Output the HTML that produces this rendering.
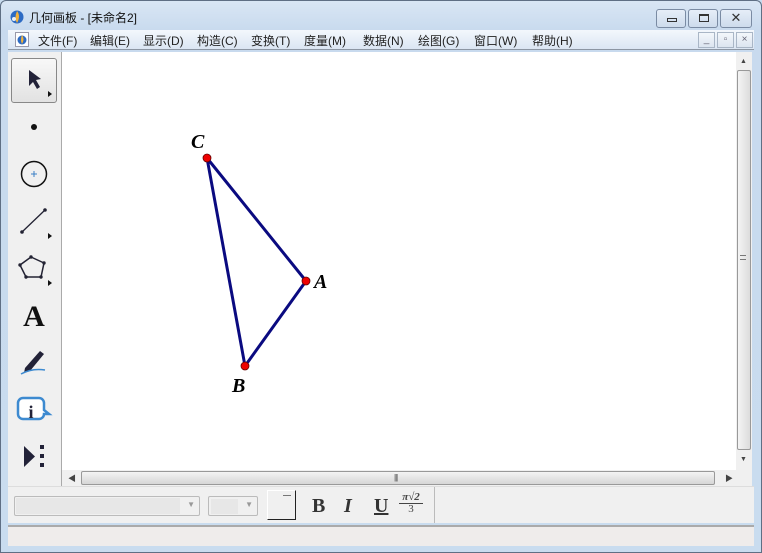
<!DOCTYPE html>
<html><head><meta charset="utf-8"><style>
*{margin:0;padding:0;box-sizing:border-box}
body{width:762px;height:553px;overflow:hidden;position:relative;background:#c9dcef;font-family:"Liberation Sans","Noto Sans CJK SC",sans-serif;font-size:12px}
.abs{position:absolute}
#frame{left:0;top:0;width:762px;height:553px;border:1px solid #5f6f84;border-radius:6px 6px 0 0;background:linear-gradient(#d9e6f4,#c8daee 30px,#c9dcef)}
.tb{top:9px;height:19px;border:1px solid #7a8ba3;border-radius:3px;background:linear-gradient(#e6eef8,#cddbec)}
#menu{left:8px;top:30px;width:746px;height:20px;background:linear-gradient(#f3f7fc,#dbe6f3);border-bottom:1px solid #8c96a3}
#menu span{position:absolute;top:2px;color:#222;font-size:12px}
.mb{top:2px;width:17px;height:16px;border:1px solid #a9b6c6;background:linear-gradient(#f3f7fb,#dce5f0);color:#667;font-size:10px;text-align:center;line-height:14px}
#tools{left:8px;top:52px;width:54px;height:434px;background:#f0f0f0;border-right:1px solid #aaa}
#canvas{left:62px;top:52px;width:674px;height:418px;background:#fff}
#vs{left:736px;top:52px;width:16px;height:418px;background:#f0f0f0}
#hs{left:62px;top:470px;width:690px;height:16px;background:#f0f0f0}
#fmt{left:8px;top:486px;width:746px;height:37px;background:#f0f0f0;border-top:1px solid #ddd}
#status{left:8px;top:525px;width:746px;height:21px;background:#efeceb;border-top:2px solid #aaa}
</style></head><body>
<div id="frame" class="abs"></div>
<svg class="abs" style="left:9px;top:9px" width="16" height="16" viewBox="0 0 16 16"><circle cx="8" cy="8" r="6.5" fill="#2d6bc4"/><path d="M8 2 Q12 7 8 14 Q5 9 8 2Z" fill="#f3b23a"/><circle cx="5" cy="10" r="2" fill="#e9eef5"/></svg>
<div class="abs" style="left:29px;top:9px;font-size:12px;color:#111">几何画板 - [未命名2]</div>
<div class="abs tb" style="left:656px;width:30px"><div class="abs" style="left:10px;top:8px;width:10px;height:4px;border:1px solid #333"></div></div>
<div class="abs tb" style="left:688px;width:30px"><div class="abs" style="left:10px;top:4px;width:10px;height:8px;border:1px solid #333;border-top-width:2px"></div></div>
<div class="abs tb" style="left:720px;width:32px;text-align:center;line-height:16px;font-size:13px;color:#333">✕</div>
<div id="menu" class="abs">
<svg class="abs" style="left:7px;top:2px" width="14" height="15" viewBox="0 0 14 15"><rect x="0.5" y="0.5" width="13" height="14" fill="#fff" stroke="#99a"/><circle cx="7" cy="8" r="4.5" fill="#2d6bc4"/><path d="M7 3 Q10 7 7 12 Q5 8 7 3Z" fill="#f3b23a"/></svg>
<span style="left:30px">文件(F)</span><span style="left:82px">编辑(E)</span><span style="left:135px">显示(D)</span><span style="left:189px">构造(C)</span><span style="left:243px">变换(T)</span><span style="left:296px">度量(M)</span><span style="left:355px">数据(N)</span><span style="left:410px">绘图(G)</span><span style="left:466px">窗口(W)</span><span style="left:524px">帮助(H)</span>
<div class="abs mb" style="left:690px">_</div><div class="abs mb" style="left:709px">▫</div><div class="abs mb" style="left:728px">×</div>
</div>
<div id="tools" class="abs">
<div class="abs" style="left:3px;top:6px;width:46px;height:45px;border:1px solid #888;border-radius:3px;background:linear-gradient(#f8f8f8,#e2e2e2)"></div>
<svg class="abs" style="left:0;top:0" width="54" height="434" viewBox="8 52 54 434">
<path d="M29 70 L29 86 L33 82 L37 89 L40 87 L36 80 L41 79Z" fill="#222238"/>
<path d="M48 91 L52 94 L48 97Z" fill="#111"/>
<circle cx="34" cy="127" r="3" fill="#111"/>
<circle cx="34" cy="174" r="12.5" fill="none" stroke="#111" stroke-width="1.5"/>
<path d="M31 174h6M34 171v6" stroke="#3b80c6" stroke-width="1"/>
<path d="M22 232 L45 210" stroke="#223" stroke-width="1.3"/><circle cx="22" cy="232" r="1.8" fill="#223"/><circle cx="45" cy="210" r="1.8" fill="#223"/>
<path d="M48 233 L52 236 L48 239Z" fill="#111"/>
<path d="M31 257 L44 263 L41 277 L26 277 L20 265Z" fill="none" stroke="#223" stroke-width="1.5"/>
<g fill="#223"><circle cx="31" cy="257" r="1.7"/><circle cx="44" cy="263" r="1.7"/><circle cx="41" cy="277" r="1.7"/><circle cx="26" cy="277" r="1.7"/><circle cx="20" cy="265" r="1.7"/></g>
<path d="M48 280 L52 283 L48 286Z" fill="#111"/>
<text x="34" y="326" text-anchor="middle" font-family="Liberation Serif" font-weight="bold" font-size="30" fill="#111">A</text>
<path d="M25 368 L40 351 L44 354 L30 371 L24 373Z" fill="#222238"/>
<path d="M21 374 Q32 368 45 370" stroke="#3d8ad0" stroke-width="1.5" fill="none"/>
<path d="M23 398 h16 a5 5 0 0 1 5 5 v7 l5 4 h-5 a5 5 0 0 1 -5 5 h-16 a5 5 0 0 1 -5 -5 v-11 a5 5 0 0 1 5 -5z" fill="#fff" stroke="#3d8ad0" stroke-width="2.5"/>
<text x="31" y="418" text-anchor="middle" font-family="Liberation Serif" font-weight="bold" font-size="18" fill="#222238">i</text>
<path d="M24 446 L24 467 L35 456.5Z" fill="#222238"/>
<g fill="#222238"><rect x="40" y="445" width="4" height="4"/><rect x="40" y="454" width="4" height="4"/><rect x="40" y="463" width="4" height="4"/></g>
</svg>
</div>
<div id="canvas" class="abs"></div>
<svg class="abs" style="left:0;top:0" width="762" height="553">
<path d="M207 158 L306 281 L245 366Z" fill="none" stroke="#0a0a80" stroke-width="3" stroke-linejoin="round"/>
<g fill="#e00" stroke="#600" stroke-width="0.8"><circle cx="207" cy="158" r="4"/><circle cx="306" cy="281" r="4"/><circle cx="245" cy="366" r="4"/></g>
<g font-family="Liberation Serif" font-style="italic" font-weight="bold" font-size="20" fill="#000"><text x="191" y="148">C</text><text x="314" y="288">A</text><text x="232" y="392">B</text></g>
</svg>
<div id="vs" class="abs">
<div class="abs" style="left:4px;top:6px;font-size:7px;color:#444">▲</div>
<div class="abs" style="left:1px;top:18px;width:14px;height:380px;border:1px solid #999;border-radius:2px;background:linear-gradient(90deg,#f4f4f4,#dcdcdc)"></div>
<div class="abs" style="left:4px;top:203px;width:6px;height:5px;border-top:1px solid #777;border-bottom:1px solid #777"></div>
<div class="abs" style="left:4px;top:404px;font-size:7px;color:#444">▼</div>
</div>
<div id="hs" class="abs">
<div class="abs" style="left:6px;top:3px;font-size:8px;color:#444">◀</div>
<div class="abs" style="left:19px;top:1px;width:634px;height:14px;border:1px solid #999;border-radius:2px;background:linear-gradient(#f4f4f4,#d6d6d6)"></div>
<div class="abs" style="left:332px;top:3px;font-size:8px;color:#555;letter-spacing:-1px">|||</div>
<div class="abs" style="left:663px;top:3px;font-size:8px;color:#444">▶</div>
</div>
<div id="fmt" class="abs">
<div class="abs" style="left:6px;top:9px;width:186px;height:20px;border:1px solid #bbb;border-radius:2px;background:#f0f0f0"><div class="abs" style="left:1px;top:1px;width:164px;height:16px;background:#e7e7e7"></div><div class="abs" style="right:4px;top:3px;font-size:8px;color:#999">▼</div></div>
<div class="abs" style="left:200px;top:9px;width:50px;height:20px;border:1px solid #bbb;border-radius:2px;background:#f0f0f0"><div class="abs" style="left:2px;top:2px;width:27px;height:15px;background:#e7e7e7"></div><div class="abs" style="right:4px;top:3px;font-size:8px;color:#999">▼</div></div>
<div class="abs" style="left:259px;top:3px;width:29px;height:30px;border:1px solid #fff;border-right:1px solid #222;border-bottom:1px solid #222;background:#f0f0f0"><div class="abs" style="left:15px;top:4px;width:8px;height:1px;background:#777"></div></div>
<div class="abs" style="left:304px;top:8px;font-family:'Liberation Serif';font-weight:bold;font-size:20px;color:#333">B</div>
<div class="abs" style="left:336px;top:8px;font-family:'Liberation Serif';font-style:italic;font-weight:bold;font-size:20px;color:#333">I</div>
<div class="abs" style="left:366px;top:8px;font-family:'Liberation Serif';font-weight:bold;font-size:20px;color:#333;text-decoration:underline">U</div>
<div class="abs" style="left:391px;top:5px;font-family:'Liberation Serif';font-weight:bold;font-style:italic;font-size:11px;color:#444;line-height:11px;text-align:center;width:24px"><div style="border-bottom:1px solid #444">π√2</div><div style="font-style:normal;font-weight:normal">3</div></div>
<div class="abs" style="left:426px;top:0;width:1px;height:36px;background:#bbb"></div>
</div>
<div id="status" class="abs"></div>
</body></html>
